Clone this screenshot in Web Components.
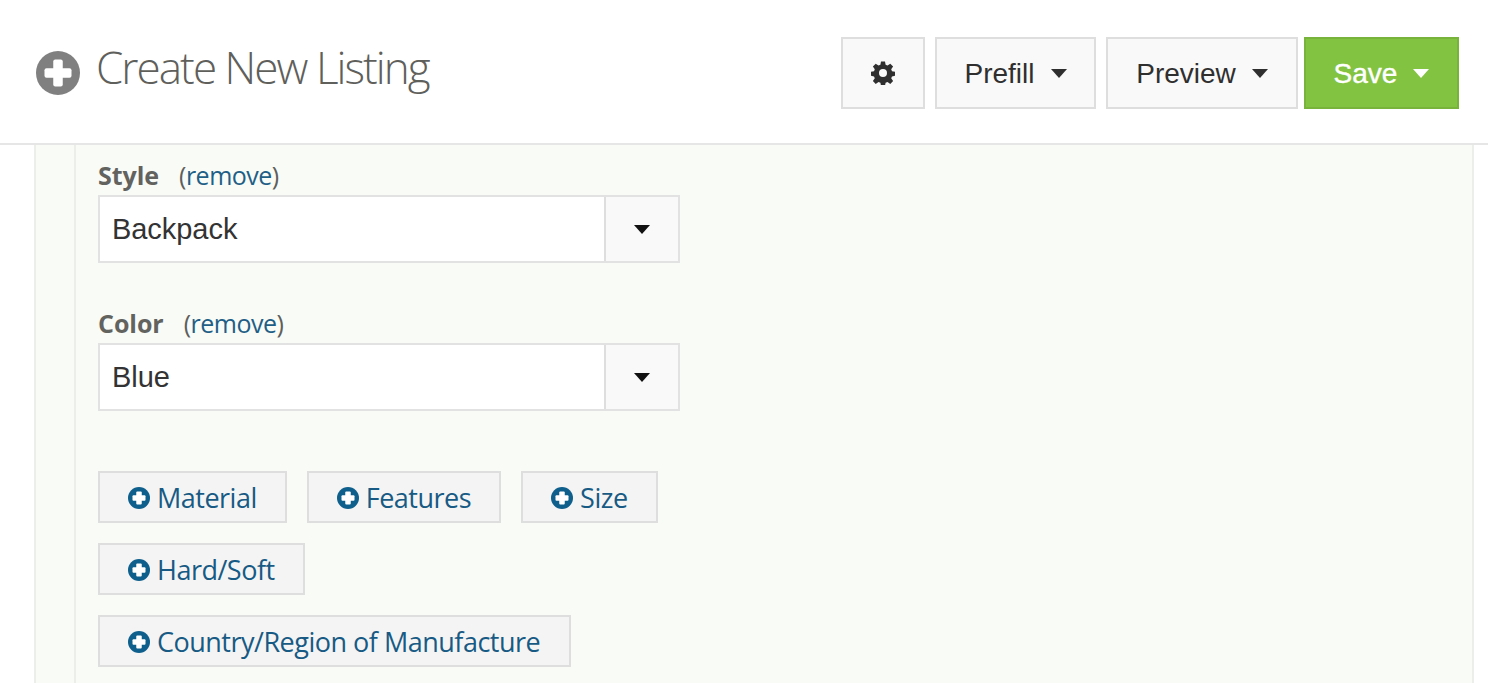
<!DOCTYPE html>
<html lang="en"><head><meta charset="utf-8"><title>Create New Listing</title>
<style>
html,body{margin:0;padding:0;height:683px;overflow:hidden;background:#fff}
body{font-family:"Open Sans","Liberation Sans",sans-serif}
.row{display:flex;gap:20px;margin-bottom:20px}
</style></head><body>
<template id="t-header"><style>
:host{display:flex;box-sizing:border-box;height:145px;border-bottom:2px solid #e6e6e6;background:#fff;justify-content:space-between;align-items:flex-start;padding:0 29px 0 36px}
.title{display:flex;align-items:center;gap:16px;height:143px}
svg{display:block;width:44px;height:44px;margin-top:2px}
h1{margin:-9px 0 0;font:300 44px/60px "Open Sans",sans-serif;letter-spacing:-1.95px;color:#5f5f5c}
.actions{display:flex;padding-top:37px}
</style><div class="title"><svg viewBox="0 0 44 44"><circle cx="22" cy="22" r="22" fill="#808080"/><rect x="8.500" y="17.250" width="27" height="9.500" rx="2" fill="#fff"/><rect x="17.250" y="8.500" width="9.500" height="27" rx="2" fill="#fff"/></svg><h1><slot name="title"></slot></h1></div><div class="actions"><slot></slot></div></template>

<template id="t-btn"><style>
:host{display:inline-flex;box-sizing:border-box;height:72px;align-items:center;justify-content:center;background:#f9f9f9;border:2px solid #dedede;font:28px "Liberation Sans",sans-serif;color:#2f2f2f;gap:16px;margin-left:var(--ml,10px);width:var(--w,auto)}
:host([primary]){background:#82c341;border-color:#78b43c;color:#fff;-webkit-text-stroke:.4px #fff}
.t{padding-top:2px}
i{display:block;width:0;height:0;border:8.500px solid transparent;border-top:9px solid currentColor;border-bottom:0}
:host([bare]) i{display:none}
</style><span class="t"><slot></slot></span><i></i></template>

<template id="t-panel"><style>
:host{display:block;box-sizing:border-box;height:538px;margin:0 14px 0 34px;background:#f9fbf7;border-left:2px solid #ecefe9;border-right:2px solid #ecefe9}
.in{box-sizing:border-box;height:100%;margin-left:38px;border-left:2px solid #ecefe9;padding:14px 0 0 22px}
</style><div class="in"><slot></slot></div></template>

<template id="t-field"><style>
:host{display:block;width:582px;margin-bottom:44px}
.lab{height:36px;display:flex;align-items:flex-start;font:25px/32px "Open Sans",sans-serif}
b{font-weight:700;color:#62625f;letter-spacing:-.05px}
span{margin-left:20px;color:#5f5f5c;letter-spacing:-.5px}
em{font-style:normal;color:#1f5f86}
.sel{box-sizing:border-box;height:68px;display:flex;border:2px solid #e2e2e2;background:#fff}
.val{flex:1;font:29px/64px "Liberation Sans",sans-serif;color:#333;padding-left:12px;letter-spacing:-.05px}
.car{width:74px;box-sizing:border-box;background:#f9f9f9;border-left:2px solid #dedede;display:flex;align-items:center;justify-content:center}
i{display:block;width:0;height:0;border:8.500px solid transparent;border-top:9px solid #111;border-bottom:0}
</style><div class="lab"><b><slot name="label"></slot></b><span>(<em>remove</em>)</span></div><div class="sel"><div class="val"><slot></slot></div><div class="car"><i></i></div></div></template>

<template id="t-add"><style>
:host{display:inline-flex;box-sizing:border-box;height:52px;align-items:center;padding:0 28px;gap:7px;background:#f4f4f4;border:2px solid #dedede;color:#175a84;font:27px "Open Sans",sans-serif;letter-spacing:-.5px}
svg{width:22px;height:22px;display:block;flex:none;margin-top:1px}
</style><svg viewBox="0 0 44 44"><circle cx="22" cy="22" r="22" fill="#0f5f8c"/><rect x="9" y="16.500" width="26" height="11" rx="2" fill="#fff"/><rect x="16.500" y="9" width="11" height="26" rx="2" fill="#fff"/></svg><slot></slot></template>

<script>
for(const [n,id] of [['app-header','t-header'],['app-btn','t-btn'],['form-panel','t-panel'],['select-field','t-field'],['add-attr','t-add']]){
customElements.define(n,class extends HTMLElement{constructor(){super();this.attachShadow({mode:'open'}).appendChild(document.getElementById(id).content.cloneNode(true))}})
}
</script>

<app-header><span slot="title">Create New Listing</span>
<app-btn bare style="--ml:0px;--w:84px"><svg width="24" height="24" viewBox="0 0 24 24" style="display:block;margin-top:-2px"><path fill="#2f2f2f" fill-rule="evenodd" d="M10 .5h4l.6 3.300 1.900.8 2.800-1.900 2.800 2.800-1.900 2.800.8 1.900 3 .6v4l-3 .6-.8 1.900 1.900 2.800-2.800 2.800-2.800-1.900-1.900.8-.6 3h-4l-.6-3-1.900-.8-2.800 1.900-2.800-2.800 1.900-2.800-.8-1.900-3-.6v-4l3-.6.8-1.900-1.900-2.800 2.800-2.800 2.800 1.900 1.900-.8zM12 8a4 4 0 1 0 0 8 4 4 0 0 0 0-8z"/></svg></app-btn>
<app-btn style="--w:161px">Prefill</app-btn>
<app-btn style="--w:192px">Preview</app-btn>
<app-btn primary style="--ml:6px;--w:155px">Save</app-btn>
</app-header>
<form-panel>
<select-field><span slot="label">Style</span>Backpack</select-field>
<select-field style="margin-bottom:60px"><span slot="label">Color</span>Blue</select-field>
<div class="row"><add-attr>Material</add-attr><add-attr>Features</add-attr><add-attr>Size</add-attr></div>
<div class="row"><add-attr>Hard/Soft</add-attr></div>
<div class="row"><add-attr style="padding-right:29px">Country/Region of Manufacture</add-attr></div>
</form-panel>
</body></html>
